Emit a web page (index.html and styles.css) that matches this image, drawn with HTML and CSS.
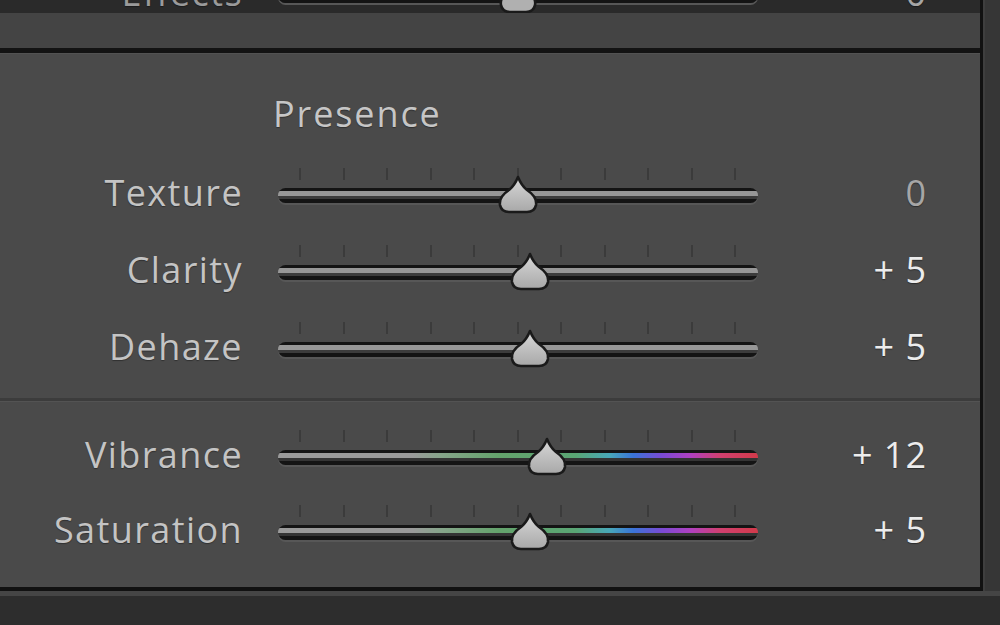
FILE: index.html
```html
<!DOCTYPE html>
<html>
<head>
<meta charset="utf-8">
<link rel="stylesheet" href="styles.css">
</head>
<body>
<div class="screen">
  <div class="upper">
    <div class="col">
      <section class="prev">
        <div class="prev-shade">
          <div class="row prev-row">
            <div class="label">Effects</div>
            <div class="slider">
              <div class="track"></div>
              <svg class="thumb" style="left:50%" viewBox="0 0 42 40" width="42" height="40"><path d="M21 3C23 8 25 12 30 16C36 20 39 25 38 30C37 35 33 37 29 37L13 37C9 37 5 35 4 30C3 25 6 20 12 16C17 12 19 8 21 3Z"/></svg>
            </div>
            <div class="value dim">0</div>
          </div>
        </div>
      </section>
      <section class="panel">
        <h2 class="title">Presence</h2>
        <div class="group">
          <div class="row">
            <div class="label">Texture</div>
            <div class="slider">
              <div class="ticks"><i></i><i></i><i></i><i></i><i></i><i></i><i></i><i></i><i></i><i></i><i></i></div>
              <div class="track"></div>
              <svg class="thumb" style="left:50%" viewBox="0 0 42 40" width="42" height="40"><defs><linearGradient id="tg" x1="0" y1="0" x2="0" y2="1"><stop offset="0" stop-color="#d8d8d8"/><stop offset="1" stop-color="#a8a8a8"/></linearGradient></defs><path d="M21 2C23 7 25 11 30 15C36 19 40 24 39 30C38 35 34 37 30 37L12 37C8 37 4 35 3 30C2 24 6 19 12 15C17 11 19 7 21 2Z"/></svg>
            </div>
            <div class="value dim">0</div>
          </div>
          <div class="row">
            <div class="label">Clarity</div>
            <div class="slider">
              <div class="ticks"><i></i><i></i><i></i><i></i><i></i><i></i><i></i><i></i><i></i><i></i><i></i></div>
              <div class="track"></div>
              <svg class="thumb" style="left:52.5%" viewBox="0 0 42 40" width="42" height="40"><path d="M21 2C23 7 25 11 30 15C36 19 40 24 39 30C38 35 34 37 30 37L12 37C8 37 4 35 3 30C2 24 6 19 12 15C17 11 19 7 21 2Z"/></svg>
            </div>
            <div class="value">+ 5</div>
          </div>
          <div class="row">
            <div class="label">Dehaze</div>
            <div class="slider">
              <div class="ticks"><i></i><i></i><i></i><i></i><i></i><i></i><i></i><i></i><i></i><i></i><i></i></div>
              <div class="track"></div>
              <svg class="thumb" style="left:52.5%" viewBox="0 0 42 40" width="42" height="40"><path d="M21 2C23 7 25 11 30 15C36 19 40 24 39 30C38 35 34 37 30 37L12 37C8 37 4 35 3 30C2 24 6 19 12 15C17 11 19 7 21 2Z"/></svg>
            </div>
            <div class="value">+ 5</div>
          </div>
        </div>
        <div class="group color">
          <div class="row row-b">
            <div class="label">Vibrance</div>
            <div class="slider">
              <div class="ticks"><i></i><i></i><i></i><i></i><i></i><i></i><i></i><i></i><i></i><i></i><i></i></div>
              <div class="track hue"></div>
              <svg class="thumb" style="left:56%" viewBox="0 0 42 40" width="42" height="40"><path d="M21 2C23 7 25 11 30 15C36 19 40 24 39 30C38 35 34 37 30 37L12 37C8 37 4 35 3 30C2 24 6 19 12 15C17 11 19 7 21 2Z"/></svg>
            </div>
            <div class="value">+ 12</div>
          </div>
          <div class="row row-b">
            <div class="label">Saturation</div>
            <div class="slider">
              <div class="ticks"><i></i><i></i><i></i><i></i><i></i><i></i><i></i><i></i><i></i><i></i><i></i></div>
              <div class="track hue"></div>
              <svg class="thumb" style="left:52.5%" viewBox="0 0 42 40" width="42" height="40"><path d="M21 2C23 7 25 11 30 15C36 19 40 24 39 30C38 35 34 37 30 37L12 37C8 37 4 35 3 30C2 24 6 19 12 15C17 11 19 7 21 2Z"/></svg>
            </div>
            <div class="value">+ 5</div>
          </div>
        </div>
      </section>
    </div>
    <div class="side"></div>
  </div>
  <div class="bottom"></div>
</div>
</body>
</html>
```

FILE: styles.css
```css
* { box-sizing: border-box; }
html, body {
  margin: 0;
  padding: 0;
  background: #2c2c2c;
}
body {
  width: 1000px;
  height: 625px;
  overflow: hidden;
  font-family: "Open Sans", "Liberation Sans", sans-serif;
}
.screen {
  display: flex;
  flex-direction: column;
  height: 625px;
}
.upper {
  display: flex;
  flex: none;
}
.col {
  width: 983px;
  border-right: 3px solid #111;
  display: flex;
  flex-direction: column;
}
.side {
  flex: 1;
  background: #363636;
  border-left: 2px solid #3e3e3e;
}
.prev {
  height: 53px;
  background: #444;
  border-bottom: 5px solid #131313;
}
.prev-shade {
  height: 13px;
  background: #2a2a2a;
  overflow: hidden;
}
.prev-row {
  margin-top: -46px;
}
.prev-row .label, .prev-row .value { color: #9a9a9a; }
.panel {
  background: #4a4a4a;
  border-top: 1px solid #525252;
  padding: 40px 0 20px;
  border-bottom: 4px solid #111;
}
.title {
  margin: 0 0 20px 273px;
  height: 40px;
  line-height: 40px;
  font-size: 36px;
  font-weight: normal;
  letter-spacing: 1.9px;
  color: #c6c6c6;
  text-shadow: 0 1px 1px rgba(0,0,0,.35);
}
.row {
  display: grid;
  grid-template-columns: 243px 480px 1fr;
  column-gap: 35px;
  align-items: center;
  height: 77px;
}
.row-b { height: 75px; }
.group.color {
  margin-top: 13px;
  border-top: 3px solid #3c3c3c;
  padding-top: 16px;
  position: relative;
}
.group.color::before {
  content: "";
  position: absolute;
  left: 0; right: 0; top: 0;
  height: 1px;
  background: #535353;
}
.label {
  text-align: right;
  font-size: 36px;
  line-height: 44px;
  letter-spacing: 1.4px;
  color: #c4c4c4;
  text-shadow: 0 1px 1px rgba(0,0,0,.35);
}
.value {
  text-align: right;
  padding-right: 53px;
  font-size: 36px;
  line-height: 44px;
  letter-spacing: 1px;
  color: #ececec;
  text-shadow: 0 1px 1px rgba(0,0,0,.4);
}
.value.dim { color: #a6a6a6; }
.slider {
  position: relative;
  height: 52px;
}
.ticks {
  position: absolute;
  left: 21px;
  right: 22px;
  top: 1px;
  height: 12px;
  display: flex;
  justify-content: space-between;
}
.ticks i {
  width: 2px;
  height: 12px;
  background: #3b3b3b;
}
.track {
  position: absolute;
  left: 0;
  right: 0;
  top: 21px;
  height: 15px;
  border-radius: 8px;
  background: linear-gradient(#141414 0 3px, #979797 3px 8px, #3c3c3c 8px 11px, #141414 11px 15px);
  box-shadow: 0 2px 0 #575757;
}
.track.hue {
  background: linear-gradient(#141414 0 3px, transparent 3px 8px, #343434 8px 11px, #141414 11px 15px),
    linear-gradient(90deg, #9a9a9a 0%, #9a9a9a 28%, #86a58a 34%, #64a36c 46%, #5aa674 62%, #48a8b8 69%, #3a74d8 74%, #7a4ad4 80%, #b040c0 86%, #d04070 92%, #d23a4a 100%);
}
.thumb {
  position: absolute;
  top: 8px;
  margin-left: -21px;
  overflow: visible;
}
.thumb path {
  fill: url(#tg);
  stroke: #1a1a1a;
  stroke-width: 2.6;
  stroke-linejoin: round;
}
.prev .thumb path { fill: #b0b0b0; }
.bottom {
  flex: 1;
  background: #2d2d2d;
  border-top: 5px solid #454545;
}
```
